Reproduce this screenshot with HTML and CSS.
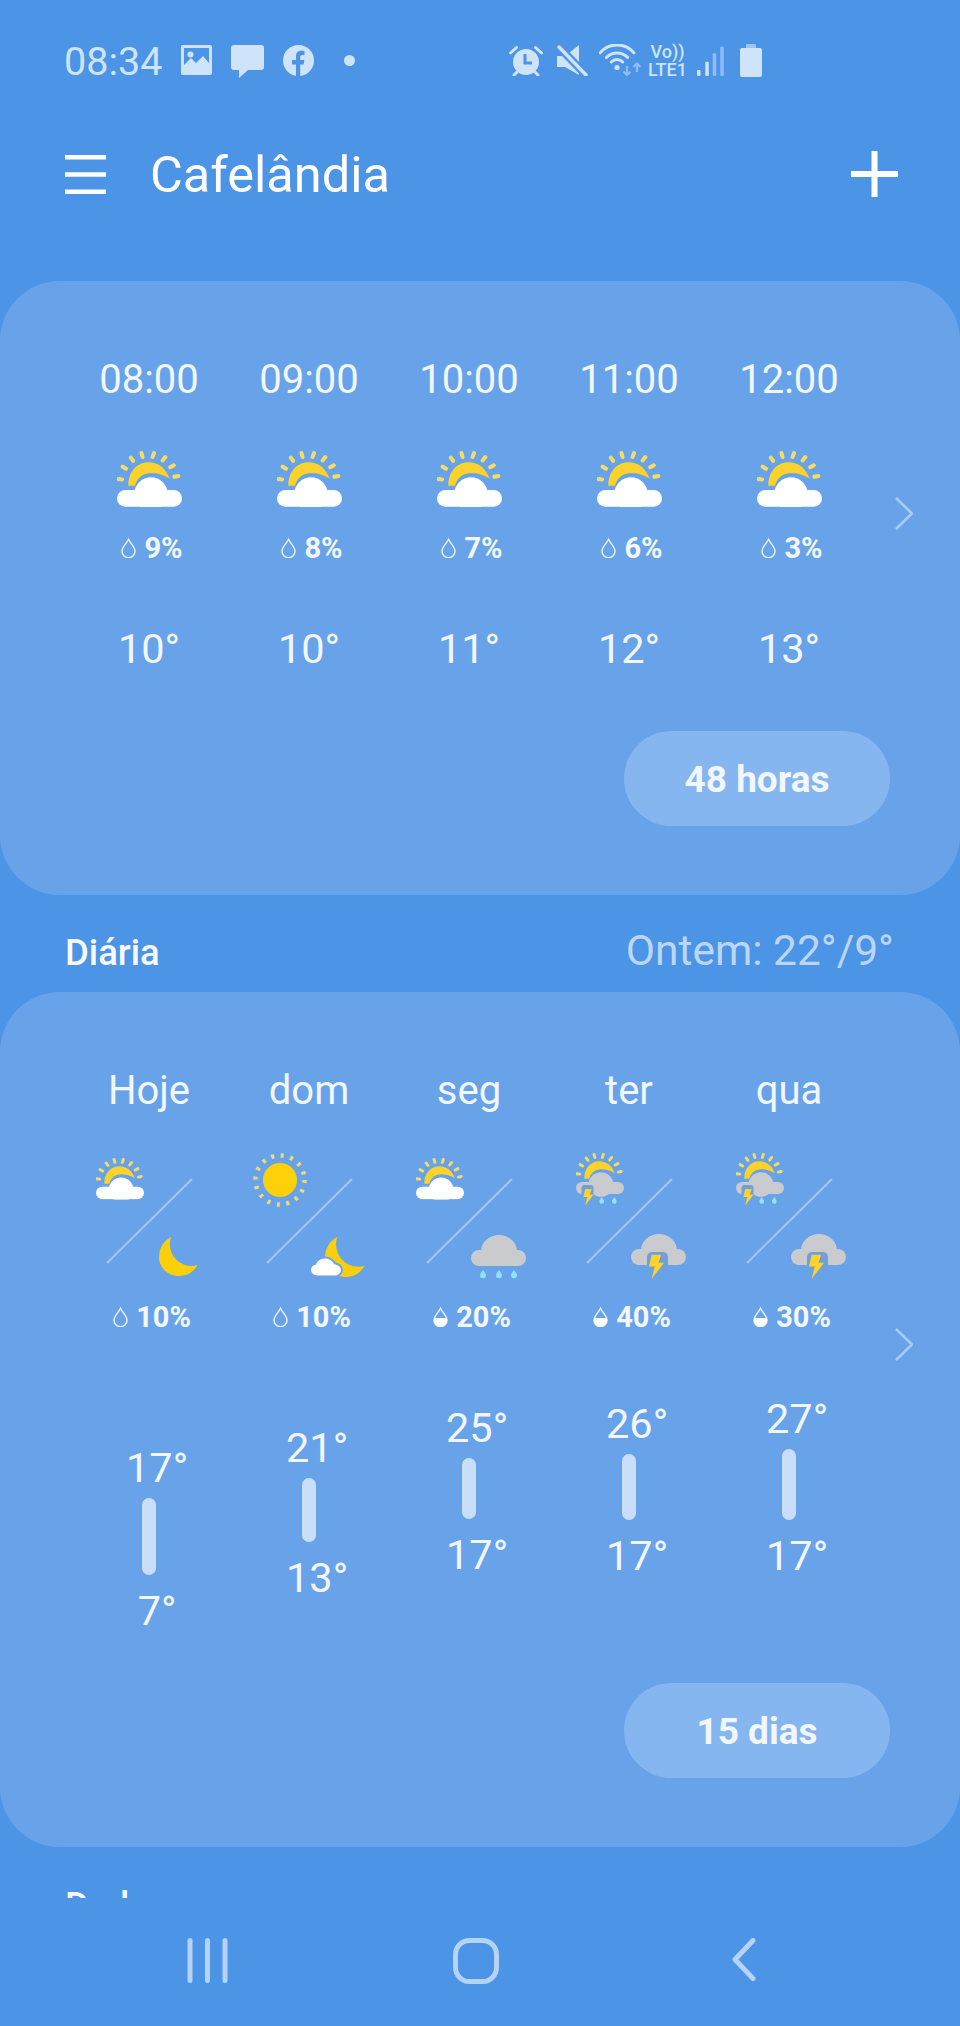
FILE: index.html
```html
<!DOCTYPE html>
<html lang="pt-BR">

<head>
    <meta charset="UTF-8">
    <meta name="viewport" content="width=device-width, initial-scale=1.0">
    <title>Cafelândia</title>
    <link rel="stylesheet" href="styles.css">
</head>

<body>
    <!-- weather icons, reused below -->
    <svg class="defs">
        <symbol id="sun-rays" viewBox="0 0 65 56">
            <path d="M1.2 28L5 28.6M5.6 15.7L9 17.7M13.8 6.7L16.2 9.9M24.4 2L25.6 6M37 2L35.6 6M48.3 6L45.7 9.4M56.8 14.4L53.2 16.2M61.3 25L57.3 25.8" fill="none" stroke="#f4dc62" stroke-width="4" stroke-linecap="round" />
            <path d="M11.3 34.7C11 21 20 11.3 31.5 11.3C41.5 11.3 49.5 18 52.5 27.5C47 24 41 22 34 22C26 22 20 27 18 34.7Z" fill="#fdd22a" />
        </symbol>
        <symbol id="sun-cloud" viewBox="0 0 65 56">
            <use href="#sun-rays" width="65" height="56" />
            <rect y="39" width="65" height="16.7" rx="8.3" fill="#fff" />
            <circle cx="34" cy="43" r="16.7" fill="#fff" />
        </symbol>
        <symbol id="sun" viewBox="0 0 54 54">
            <circle cx="27" cy="27" r="24.5" fill="none" stroke="#efdc6c" stroke-width="4.5" stroke-dasharray="3 6.62" />
            <circle cx="27" cy="27" r="17" fill="#fdd10a" />
        </symbol>
        <symbol id="moon" viewBox="0 0 40 40">
            <path d="M12 0C4 4 0 12 0 20C0 31 9 39 20 39C28 39 35 35 38.5 28C33 30 26 29 20 25C12 19 9 9 12 0Z" fill="#fbcf0b" />
        </symbol>
        <symbol id="moon-cloud" viewBox="0 0 56 41">
            <use href="#moon" x="14" y="0" width="41" height="41" />
            <path d="M7 38.5C2 38.5 0 35 0 33C0 30 2 28 5 27.500C6 24 10 21.500 14 21.500C18 21.500 22 24 23.500 27.500C27 27.500 30 30 30 33C30 36 27 38.500 24 38.500Z" fill="#fff" stroke="#68a3ea" stroke-width="4" paint-order="stroke" />
        </symbol>
        <symbol id="grey-cloud" viewBox="0 0 55 31">
            <rect y="15" width="55" height="16" rx="8" fill="#c9cbce" />
            <ellipse cx="28" cy="16" rx="18" ry="16" fill="#c9cbce" />
        </symbol>
        <symbol id="bolt" viewBox="0 0 20 28">
            <path d="M5 1.500H15L12 10H18L5 27L8 14H2Z" fill="#fdd22a" />
        </symbol>
        <symbol id="rain-cloud" viewBox="0 0 55 45">
            <use href="#grey-cloud" width="55" height="31" />
            <path d="M12 35c-1.500 2.500-3 3.500-3 5.200a3 3 0 0 0 6 0c0-1.700-1.500-2.700-3-5.200ZM28 35c-1.500 2.500-3 3.500-3 5.200a3 3 0 0 0 6 0c0-1.700-1.500-2.700-3-5.200ZM43 35c-1.500 2.500-3 3.500-3 5.200a3 3 0 0 0 6 0c0-1.700-1.500-2.700-3-5.200Z" fill="#8fe4fb" />
        </symbol>
        <symbol id="storm-cloud" viewBox="0 0 55 46">
            <use href="#grey-cloud" width="55" height="31" />
            <rect x="16" y="18" width="21" height="18" rx="5" fill="#6f9fdc" />
            <use href="#bolt" x="16" y="19" width="19" height="27" />
        </symbol>
        <symbol id="storm-sun" viewBox="0 0 48 54">
            <use href="#sun-rays" width="48" height="41.400" />
            <rect y="29" width="48" height="12" rx="6" fill="#c9cbce" />
            <circle cx="25" cy="31.500" r="12.300" fill="#c9cbce" />
            <rect x="5.500" y="32" width="12" height="12" rx="3" fill="#6f9fdc" />
            <use href="#bolt" x="6" y="34" width="13" height="20" />
            <path d="M25.700 44c-1.200 2-2.400 3-2.400 4.400a2.400 2.400 0 0 0 4.800 0c0-1.400-1.200-2.400-2.400-4.400ZM38.300 44c-1.200 2-2.400 3-2.400 4.400a2.400 2.400 0 0 0 4.800 0c0-1.400-1.200-2.400-2.400-4.400Z" fill="#8fe4fb" />
        </symbol>
        <symbol id="drop" viewBox="0 0 15 20">
            <path d="M7.500 1.200C5.500 5.500 1 9 1 13.200A6.500 6.500 0 0 0 14 13.200C14 9 9.500 5.500 7.500 1.200Z" fill="none" stroke="#e6f1fd" stroke-width="1.500" />
        </symbol>
        <symbol id="drop-half" viewBox="0 0 15 20">
            <use href="#drop" width="15" height="20" />
            <path d="M1 11H14V13.200A6.500 6.500 0 0 1 1 13.200Z" fill="#fff" />
        </symbol>
    </svg>

    <div class="screen">
        <div class="content">
            <div class="status">
                <div class="status-group">
                    <span class="clock">08:34</span>
                    <svg class="st-image" viewBox="0 0 31 30">
                        <rect width="31" height="30" rx="2" fill="#cfe3fb" />
                        <path d="M3 3H28V18L22 11L15 18L10 13L3 20Z" fill="#4c94e6" />
                        <circle cx="9.500" cy="9.500" r="3" fill="#cfe3fb" />
                    </svg>
                    <svg class="st-msg" viewBox="0 0 33 33">
                        <path d="M3 0H30A3 3 0 0 1 33 3V22A3 3 0 0 1 30 25H17L8 33V25H3A3 3 0 0 1 0 22V3A3 3 0 0 1 3 0Z" fill="#cfe3fb" />
                    </svg>
                    <svg class="st-fb" viewBox="0 0 31 31">
                        <circle cx="15.500" cy="15.500" r="15.500" fill="#cfe3fb" />
                        <path d="M13 31V19.500H9V15H13V11.500C13 7.800 15.200 5.800 18.500 5.800C20 5.800 21.500 6 21.500 6V10H19.500C17.700 10 17.200 11 17.200 12.200V15H21.300L20.600 19.500H17.200V31Z" fill="#4c94e6" />
                    </svg>
                    <span class="st-dot"></span>
                </div>
                <div class="status-group status-right">
                    <svg class="st-alarm" viewBox="0 0 34 31">
                        <circle cx="17" cy="17" r="13" fill="#cfe3fb" />
                        <path d="M16 9V18H23" fill="none" stroke="#4c94e6" stroke-width="3" />
                        <path d="M1.500 8L7.500 2.500M32.500 8L26.500 2.500M5 30L8 27M29 30L26 27" fill="none" stroke="#cfe3fb" stroke-width="3" stroke-linecap="round" />
                    </svg>
                    <svg class="st-mute" viewBox="0 0 31 31">
                        <path d="M0 11H8L22 0V30L8 22H0Z" fill="#cfe3fb" />
                        <path d="M2 2L29 30" stroke="#4c94e6" stroke-width="8" />
                        <path d="M2 2L29 30" stroke="#cfe3fb" stroke-width="3.500" stroke-linecap="round" />
                    </svg>
                    <svg class="st-wifi" viewBox="0 0 42 33">
                        <path d="M1.100 8.900A22 22 0 0 1 34.900 8.900M7.400 13.400A15 15 0 0 1 28.600 13.400M12.300 18A8 8 0 0 1 23.700 18" fill="none" stroke="#cfe3fb" stroke-width="3" stroke-linecap="round" />
                        <circle cx="18" cy="23.500" r="2.600" fill="#cfe3fb" />
                        <path d="M28 22V31M24.500 27.500L28 31L31.500 27.500M38 28V20M34.500 23L38 19.500L41.500 23" fill="none" stroke="#8fbcf2" stroke-width="2.200" />
                    </svg>
                    <div class="volte"><span>Vo))</span><span>LTE1</span></div>
                    <svg class="st-signal" viewBox="0 0 27 30">
                        <rect y="24" width="3.500" height="6" rx="1" fill="#cfe3fb" />
                        <rect x="8.300" y="15.700" width="3.500" height="14.300" rx="1" fill="#cfe3fb" />
                        <rect x="15.700" y="7.300" width="3.500" height="22.700" rx="1" fill="#8fbcf2" />
                        <rect x="23.300" y=".7" width="3.500" height="29.300" rx="1" fill="#8fbcf2" />
                    </svg>
                    <svg class="st-battery" viewBox="0 0 22 33">
                        <rect x="6" width="10" height="6" rx="1" fill="#9ec5f4" />
                        <rect y="4" width="22" height="29" rx="2" fill="#cfe3fb" />
                    </svg>
                </div>
            </div>

            <div class="toolbar">
                <svg class="menu-icon" viewBox="0 0 41 39">
                    <path d="M0 2.200H41M0 19.500H41M0 36.800H41" stroke="#fff" stroke-width="4.400" />
                </svg>
                <h1 class="city">Cafelândia</h1>
                <svg class="add-icon" viewBox="0 0 47 46">
                    <path d="M23.500 0V46M0 23H47" stroke="#fff" stroke-width="6" />
                </svg>
            </div>

            <section class="card">
                <div class="row">
                    <div class="col">
                        <div class="label">08:00</div>
                        <svg class="hour-icon"><use href="#sun-cloud" /></svg>
                        <div class="rain rain-hour"><svg class="drop"><use href="#drop" /></svg>9%</div>
                        <div class="temp hour-temp">10°</div>
                    </div>
                    <div class="col">
                        <div class="label">09:00</div>
                        <svg class="hour-icon"><use href="#sun-cloud" /></svg>
                        <div class="rain rain-hour"><svg class="drop"><use href="#drop" /></svg>8%</div>
                        <div class="temp hour-temp">10°</div>
                    </div>
                    <div class="col">
                        <div class="label">10:00</div>
                        <svg class="hour-icon"><use href="#sun-cloud" /></svg>
                        <div class="rain rain-hour"><svg class="drop"><use href="#drop" /></svg>7%</div>
                        <div class="temp hour-temp">11°</div>
                    </div>
                    <div class="col">
                        <div class="label">11:00</div>
                        <svg class="hour-icon"><use href="#sun-cloud" /></svg>
                        <div class="rain rain-hour"><svg class="drop"><use href="#drop" /></svg>6%</div>
                        <div class="temp hour-temp">12°</div>
                    </div>
                    <div class="col">
                        <div class="label">12:00</div>
                        <svg class="hour-icon"><use href="#sun-cloud" /></svg>
                        <div class="rain rain-hour"><svg class="drop"><use href="#drop" /></svg>3%</div>
                        <div class="temp hour-temp">13°</div>
                    </div>
                    <svg class="chevron" viewBox="0 0 18 33"><path d="M1 1L17 16.500L1 32" /></svg>
                </div>
                <div class="card-foot"><span class="pill">48 horas</span></div>
            </section>

            <div class="section-head">
                <h2 class="section-title">Diária</h2>
                <span class="yesterday">Ontem: 22°/9°</span>
            </div>

            <section class="card card-daily">
                <div class="row">
                    <div class="col">
                        <div class="label">Hoje</div>
                        <svg class="day-icons" viewBox="0 0 160 130">
                            <use href="#sun-cloud" x="27" y="8" width="48" height="41.400" />
                            <path class="split" d="M123 29L38 113" />
                            <use href="#moon" x="90" y="87" width="40" height="40" />
                        </svg>
                        <div class="rain rain-day"><svg class="drop"><use href="#drop" /></svg>10%</div>
                        <div class="temps" style="margin-top: 112px">
                            <div class="temp">17<span class="deg">°</span></div>
                            <div class="range" style="height: 77px"></div>
                            <div class="temp">7<span class="deg">°</span></div>
                        </div>
                    </div>
                    <div class="col">
                        <div class="label">dom</div>
                        <svg class="day-icons" viewBox="0 0 160 130">
                            <use href="#sun" x="24" y="3" width="54" height="54" />
                            <path class="split" d="M123 29L38 113" />
                            <use href="#moon-cloud" x="82" y="87" width="56" height="41" />
                        </svg>
                        <div class="rain rain-day"><svg class="drop"><use href="#drop" /></svg>10%</div>
                        <div class="temps" style="margin-top: 92px">
                            <div class="temp">21<span class="deg">°</span></div>
                            <div class="range" style="height: 64px"></div>
                            <div class="temp">13<span class="deg">°</span></div>
                        </div>
                    </div>
                    <div class="col">
                        <div class="label">seg</div>
                        <svg class="day-icons" viewBox="0 0 160 130">
                            <use href="#sun-cloud" x="27" y="8" width="48" height="41.400" />
                            <path class="split" d="M123 29L38 113" />
                            <use href="#rain-cloud" x="82" y="85" width="55" height="45" />
                        </svg>
                        <div class="rain rain-day"><svg class="drop"><use href="#drop-half" /></svg>20%</div>
                        <div class="temps" style="margin-top: 72px">
                            <div class="temp">25<span class="deg">°</span></div>
                            <div class="range" style="height: 61px"></div>
                            <div class="temp">17<span class="deg">°</span></div>
                        </div>
                    </div>
                    <div class="col">
                        <div class="label">ter</div>
                        <svg class="day-icons" viewBox="0 0 160 130">
                            <use href="#storm-sun" x="27" y="3" width="48" height="54" />
                            <path class="split" d="M123 29L38 113" />
                            <use href="#storm-cloud" x="82" y="84" width="55" height="46" />
                        </svg>
                        <div class="rain rain-day"><svg class="drop"><use href="#drop-half" /></svg>40%</div>
                        <div class="temps" style="margin-top: 68px">
                            <div class="temp">26<span class="deg">°</span></div>
                            <div class="range" style="height: 66px"></div>
                            <div class="temp">17<span class="deg">°</span></div>
                        </div>
                    </div>
                    <div class="col">
                        <div class="label">qua</div>
                        <svg class="day-icons" viewBox="0 0 160 130">
                            <use href="#storm-sun" x="27" y="3" width="48" height="54" />
                            <path class="split" d="M123 29L38 113" />
                            <use href="#storm-cloud" x="82" y="84" width="55" height="46" />
                        </svg>
                        <div class="rain rain-day"><svg class="drop"><use href="#drop-half" /></svg>30%</div>
                        <div class="temps" style="margin-top: 63px">
                            <div class="temp">27<span class="deg">°</span></div>
                            <div class="range" style="height: 71px"></div>
                            <div class="temp">17<span class="deg">°</span></div>
                        </div>
                    </div>
                    <svg class="chevron" viewBox="0 0 18 33"><path d="M1 1L17 16.500L1 32" /></svg>
                </div>
                <div class="card-foot"><span class="pill">15 dias</span></div>
            </section>

            <h2 class="section-title next-title">Dados</h2>
        </div>

        <nav class="navbar">
            <svg class="nav-recent" viewBox="0 0 41 45"><path d="M3 2.500V42.500M20.500 2.500V42.500M38 2.500V42.500" /></svg>
            <svg class="nav-home" viewBox="0 0 46 46"><rect x="2.500" y="2.500" width="41" height="41" rx="14" /></svg>
            <svg class="nav-back" viewBox="0 0 26 43"><path d="M22 2.500L4 21.500L22 40.500" /></svg>
        </nav>
    </div>
</body>

</html>
```

FILE: styles.css
```css
* {
    box-sizing: border-box;
    margin: 0;
    padding: 0;
    font-family: Roboto, "Liberation Sans", sans-serif;
}

body {
    background-color: #4c94e6;
    color: #fff;
}

.defs {
    display: none;
}

.screen {
    display: flex;
    flex-direction: column;
    width: 960px;
    height: 2026px;
    overflow: hidden;
}

.content {
    flex: 1;
    min-height: 0;
    overflow: hidden;
}

/* status bar */
.status {
    display: flex;
    justify-content: space-between;
    align-items: flex-start;
    height: 124px;
    padding: 44px 198px 0 64px;
    color: #cfe3fb;
}

.status-group {
    display: flex;
    align-items: flex-start;
    gap: 19px;
}

.status-right {
    gap: 10px;
}

.clock {
    font-size: 39.500px;
    line-height: 36px;
}

.st-image { width: 31px; height: 30px; margin-top: 1px; }
.st-msg { width: 33px; height: 33px; margin-top: 1px; }
.st-fb { width: 31px; height: 31px; margin-top: 1px; }

.st-dot {
    width: 11px;
    height: 11px;
    margin: 11px 0 0 11px;
    border-radius: 50%;
    background-color: #cfe3fb;
}

.st-alarm { width: 34px; height: 31px; margin: 1px 4px 0 0; }
.st-mute { width: 31px; height: 31px; margin: 1px 1px 0 0; }
.st-wifi { width: 42px; height: 33px; margin-right: -3px; }
.st-signal { width: 27px; height: 30px; margin: 2px 6px 0 0; }
.st-battery { width: 22px; height: 33px; }

.volte {
    display: flex;
    flex-direction: column;
    align-items: center;
    width: 39px;
    margin-top: -1px;
    font-size: 18px;
    font-weight: 500;
    line-height: 18px;
}

/* toolbar */
.toolbar {
    display: flex;
    align-items: center;
    height: 100px;
    margin-bottom: 57px;
    padding: 0 62px 0 65px;
}

.menu-icon {
    width: 41px;
    height: 39px;
}

.city {
    flex: 1;
    margin-left: 44px;
    font-size: 50.500px;
    font-weight: 400;
}

.add-icon {
    width: 47px;
    height: 46px;
}

/* cards */
.card {
    padding: 76px 0 69px 69px;
    border-radius: 60px;
    background-color: #68a3ea;
}

.row {
    display: flex;
    margin-bottom: 59px;
}

.card-daily .row {
    margin-bottom: 49px;
}

.col {
    flex: none;
    display: flex;
    flex-direction: column;
    align-items: center;
    width: 160px;
}

.label {
    font-size: 40px;
    line-height: 46px;
    color: #f2f7fe;
}

.hour-icon {
    width: 65px;
    height: 56px;
    margin-top: 48px;
}

.rain {
    display: flex;
    align-items: center;
    gap: 8px;
    padding-left: 6px;
    font-size: 29px;
    font-weight: 700;
    line-height: 32px;
    color: #f2f7fe;
}

.rain-hour {
    margin-top: 25px;
}

.rain-day {
    margin-top: 21px;
}

.drop {
    width: 15px;
    height: 20px;
}

.temp {
    font-size: 41.500px;
    line-height: 46px;
    color: #f2f7fe;
}

.hour-temp {
    margin-top: 62px;
}

.deg {
    margin-right: -0.39em;
}

.day-icons {
    width: 160px;
    height: 130px;
    margin-top: 36px;
}

.split {
    fill: none;
    stroke: #a2c6f3;
    stroke-width: 2;
}

.temps {
    display: flex;
    flex-direction: column;
    align-items: center;
}

.range {
    width: 14px;
    margin: 7px 0 13px;
    border-radius: 7px;
    background-color: #c9dff9;
}

.chevron {
    flex: none;
    align-self: center;
    width: 18px;
    height: 33px;
    margin: 0 0 3px 26px;
    fill: none;
    stroke: #a9ccf5;
    stroke-width: 2.500;
}

.card-daily .chevron {
    margin-bottom: 14px;
}

.card-foot {
    display: flex;
    justify-content: flex-end;
    padding-right: 70px;
}

.pill {
    display: flex;
    justify-content: center;
    align-items: center;
    width: 266px;
    height: 95px;
    padding-top: 2px;
    border-radius: 48px;
    background-color: #86b6ef;
    font-size: 37px;
    font-weight: 700;
    color: #f2f7fe;
}

/* section headers */
.section-head {
    display: flex;
    justify-content: space-between;
    align-items: baseline;
    height: 97px;
    padding: 31px 66px 0 65px;
}

.section-title {
    font-size: 36.500px;
    font-weight: 500;
    color: #f6faff;
}

.yesterday {
    font-size: 42.500px;
    color: #bcd6f7;
}

.next-title {
    margin: 37px 0 0 65px;
}

/* navigation bar */
.navbar {
    flex: none;
    display: grid;
    grid-template-columns: repeat(3, 268.500px);
    justify-items: center;
    align-items: start;
    height: 128px;
    padding: 40px 0 0 73px;
    background-color: #4c94e6;
}

.navbar svg {
    fill: none;
    stroke: #b5d3f8;
    stroke-width: 5;
    stroke-linecap: round;
    stroke-linejoin: round;
}

.nav-recent { width: 41px; height: 45px; }
.nav-home { width: 46px; height: 46px; }
.nav-back { width: 26px; height: 43px; }
```
